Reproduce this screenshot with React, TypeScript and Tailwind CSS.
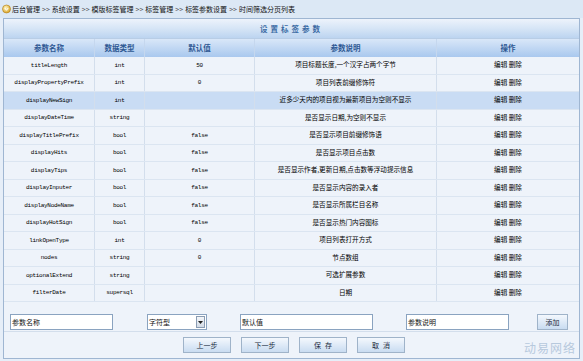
import React from "react";

const rows: [string, string, string, string][] = [
  ["titleLength", "int", "50", "项目标题长度,一个汉字占两个字节"],
  ["displayPropertyPrefix", "int", "0", "项目列表前缀修饰符"],
  ["displayNewSign", "int", "", "近多少天内的项目视为最新项目为空则不显示"],
  ["displayDateTime", "string", "", "是否显示日期,为空则不显示"],
  ["displayTitlePrefix", "bool", "false", "是否显示项目前缀修饰语"],
  ["displayHits", "bool", "false", "是否显示项目点击数"],
  ["displayTips", "bool", "false", "是否显示作者,更新日期,点击数等浮动提示信息"],
  ["displayInputer", "bool", "false", "是否显示内容的录入者"],
  ["displayNodeName", "bool", "false", "是否显示所属栏目名称"],
  ["displayHotSign", "bool", "false", "是否显示热门内容图标"],
  ["linkOpenType", "int", "0", "项目列表打开方式"],
  ["nodes", "string", "0", "节点数组"],
  ["optionalExtend", "string", "", "可选扩展参数"],
  ["filterDate", "supersql", "", "日期"],
];

const cjk = "font-['Noto_Sans_CJK_SC',sans-serif]";
const mono = "font-['Liberation_Mono',monospace]";
const cols = "grid grid-cols-[91px_50px_110px_182px_1fr]";

function Btn({ children, w }: { children: React.ReactNode; w: string }) {
  return (
    <div
      className={`${w} h-[16px] flex items-center justify-center border border-[#9fb3c9] bg-gradient-to-b from-[#f4f8fd] to-[#c9dcf1] text-[7px] text-[#1a2a40] ${cjk}`}
    >
      {children}
    </div>
  );
}

const crumbs = ["后台管理", "系统设置", "模版标签管理", "标签管理", "标签参数设置", "时间筛选分页列表"];

export default function App() {
  return (
    <div className={`w-[583px] h-[361px] bg-[#e6eef8] overflow-hidden ${cjk}`}>
      {/* breadcrumb */}
      <div className="h-[18px] flex items-center pl-[2px] bg-[#dce8f5] text-[7px] text-[#111] gap-[1px]">
        <svg width="9" height="10" viewBox="0 0 9 10">
          <defs>
            <radialGradient id="g" cx="0.4" cy="0.35" r="0.7">
              <stop offset="0" stopColor="#fff6c0" />
              <stop offset="1" stopColor="#d8a020" />
            </radialGradient>
          </defs>
          <circle cx="4.5" cy="5" r="4" fill="url(#g)" stroke="#b07a10" strokeWidth="0.6" />
          <path d="M2.8 4 L4.5 6.3 L6.2 4" fill="none" stroke="#fff" strokeWidth="1" />
        </svg>
        <div className="flex items-center gap-[2px]">
          {crumbs.map((c, i) => (
            <React.Fragment key={c}>
              {i > 0 && <span className="text-[#555]">&gt;&gt;</span>}
              <span>{c}</span>
            </React.Fragment>
          ))}
        </div>
      </div>

      {/* panel */}
      <div className="ml-[3px] mr-[3px] border border-[#9fb6d2] bg-[#edf2f9]">
        <div className="h-[20px] flex items-center justify-center bg-gradient-to-b from-[#edf3fb] via-[#d6e5f6] to-[#bcd4f0] border-b border-[#b8cde6]">
          <span className="text-[7.5px] font-bold text-[#3a6aa3] tracking-[3px]">设置标签参数</span>
        </div>
        <div className={`${cols} h-[18px] bg-gradient-to-b from-[#d9e7f8] to-[#a9c8ee] text-[7.5px] font-bold text-[#2e5893]`}>
          {["参数名称", "数据类型", "默认值", "参数说明", "操作"].map((h, i) => (
            <div key={h} className={`flex items-center justify-center ${i < 4 ? "border-r border-[#c5d7ee]" : ""}`}>
              {h}
            </div>
          ))}
        </div>
        {rows.map((r, idx) => (
          <div
            key={r[0]}
            className={`${cols} h-[17.5px] border-b border-[#dbe5f1] text-[#000] ${idx === 2 ? "bg-[#c9dcf4]" : "bg-[#eef3fa]"}`}
          >
            <div className={`flex items-center justify-center border-r border-[#d3deec] text-[6px] tracking-[-0.3px] ${mono}`}>{r[0]}</div>
            <div className={`flex items-center justify-center border-r border-[#d3deec] text-[6px] tracking-[-0.3px] ${mono}`}>{r[1]}</div>
            <div className={`flex items-center justify-center border-r border-[#d3deec] text-[6px] tracking-[-0.3px] ${mono}`}>{r[2]}</div>
            <div className="flex items-center justify-center border-r border-[#d3deec] text-[6.6px] whitespace-nowrap">{r[3]}</div>
            <div className="flex items-center justify-center text-[6.6px]">编辑 删除</div>
          </div>
        ))}
        {/* input row */}
        <div className="h-[30px] flex items-end pb-[1px] border-b border-[#d3deec] bg-[#eef3fa] text-[7px] text-[#111]">
          <div className="ml-[6px] w-[103px] h-[16px] border border-[#8aa3c0] bg-white flex items-center pl-[1px]">参数名称</div>
          <div className="ml-[34px] w-[60px] h-[16px] border border-[#8aa3c0] bg-white flex items-center pl-[1px] justify-between">
            <span>字符型</span>
            <div className="w-[9px] h-[12px] mr-[1px] border border-[#8a9cb3] bg-gradient-to-b from-[#f4f6f9] to-[#d3dbe6] flex items-center justify-center">
              <svg width="5" height="3" viewBox="0 0 5 3">
                <path d="M0 0 L5 0 L2.5 3 Z" fill="#222" />
              </svg>
            </div>
          </div>
          <div className="ml-[33px] w-[133px] h-[16px] border border-[#8aa3c0] bg-white flex items-center pl-[1px]">默认值</div>
          <div className="ml-[33px] w-[103px] h-[16px] border border-[#8aa3c0] bg-white flex items-center pl-[1px]">参数说明</div>
          <div className="ml-[28px]">
            <Btn w="w-[31px]">添加</Btn>
          </div>
        </div>
        {/* button row */}
        <div className="h-[26px] relative flex items-center pl-[179px] gap-[10px] bg-[#eef3fa]">
          <Btn w="w-[48px]">上一步</Btn>
          <Btn w="w-[48px]">下一步</Btn>
          <Btn w="w-[48px]"><span className="tracking-[4px] pl-[4px]">保存</span></Btn>
          <Btn w="w-[48px]"><span className="tracking-[4px] pl-[4px]">取消</span></Btn>
          <span className="absolute right-[3px] bottom-[1px] text-[12px] text-[#b7c9dd] tracking-[1px]">动易网络</span>
        </div>
      </div>
    </div>
  );
}
